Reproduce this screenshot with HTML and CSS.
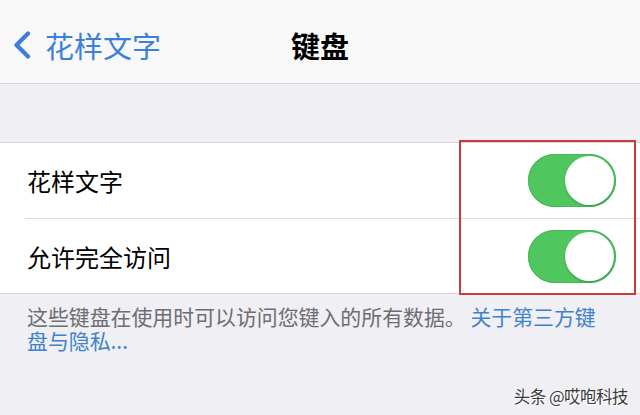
FILE: index.html
```html
<!DOCTYPE html>
<html lang="zh-CN">
<head>
<meta charset="utf-8">
<link rel="stylesheet" href="styles.css">
</head>
<body>
<div class="screen">
  <header class="nav">
    <div class="back">
      <svg class="chevron" width="18" height="28" viewBox="0 0 18 28"><path d="M15 2.5 L3.5 14 L15 25.5" fill="none" stroke="#3b7fd9" stroke-width="4.2" stroke-linecap="round" stroke-linejoin="round"/></svg>
      <span class="back-label">花样文字</span>
    </div>
    <h1 class="title">键盘</h1>
  </header>
  <div class="spacer"></div>
  <section class="group">
    <div class="row">
      <span class="row-label">花样文字</span>
      <span class="switch"><span class="knob"></span></span>
    </div>
    <div class="row">
      <span class="row-label">允许完全访问</span>
      <span class="switch"><span class="knob"></span></span>
    </div>
    <div class="highlight"></div>
  </section>
  <p class="footer">这些键盘在使用时可以访问您键入的所有数据。 <span class="link">关于第三方键盘与隐私...</span></p>
  <div class="watermark">头条 @哎咆科技</div>
</div>
</body>
</html>
```

FILE: styles.css
```css
html, body {
  margin: 0;
  padding: 0;
}
body {
  width: 640px;
  height: 415px;
  overflow: hidden;
  background: #efeff4;
  font-family: "Noto Sans CJK SC", "Noto Sans", sans-serif;
}
.screen {
  position: relative;
  width: 640px;
  height: 415px;
  display: flex;
  flex-direction: column;
}
.nav {
  position: relative;
  height: 84px;
  box-sizing: border-box;
  padding-top: 6px;
  background: #f8f8f8;
  border-bottom: 1px solid #d6d6da;
  display: flex;
  align-items: center;
  flex-shrink: 0;
}
.back {
  display: flex;
  align-items: center;
  padding-left: 13px;
  gap: 14px;
}
.chevron {
  display: block;
}
.back-label {
  font-size: 29px;
  line-height: 34px;
  color: #3b7fd9;
}
.title {
  position: absolute;
  left: 0;
  right: 0;
  top: 6px;
  bottom: 0;
  margin: 0;
  display: flex;
  align-items: center;
  justify-content: center;
  font-size: 29px;
  font-weight: 700;
  color: #000;
  pointer-events: none;
}
.spacer {
  height: 58px;
  flex-shrink: 0;
}
.group {
  position: relative;
  background: #fff;
  border-top: 1px solid #d6d6da;
  border-bottom: 1px solid #d6d6da;
  flex-shrink: 0;
}
.row {
  height: 75px;
  display: flex;
  align-items: center;
  justify-content: space-between;
  margin-left: 25px;
  padding-right: 24px;
  box-sizing: border-box;
}
.row + .row {
  border-top: 1px solid #dcdce0;
}
.row-label {
  font-size: 24px;
  color: #000;
  padding-left: 2px;
}
.switch {
  position: relative;
  width: 88px;
  height: 53px;
  border-radius: 27px;
  background: #4fc65e;
  box-shadow: inset 0 0 0 1px #47b856;
}
.knob {
  position: absolute;
  right: 2px;
  top: 2px;
  width: 49px;
  height: 49px;
  border-radius: 50%;
  background: #fff;
  box-shadow: 0 1px 2px rgba(0, 0, 0, 0.25);
}
.highlight {
  position: absolute;
  left: 459px;
  top: -3px;
  width: 177px;
  height: 155px;
  box-sizing: border-box;
  border: 2px solid #cc3a3c;
}
.footer {
  margin: 0;
  padding: 10px 30px 0 27px;
  font-size: 20.9px;
  line-height: 24px;
  color: #6d6d72;
}
.link {
  color: #3f82cc;
}
.watermark {
  position: absolute;
  right: 12px;
  bottom: 7px;
  font-size: 16.5px;
  color: #3a3a3a;
  text-shadow: 1px 1px 0 #fff, -1px 0 0 #fff;
  letter-spacing: -0.5px;
}
```
